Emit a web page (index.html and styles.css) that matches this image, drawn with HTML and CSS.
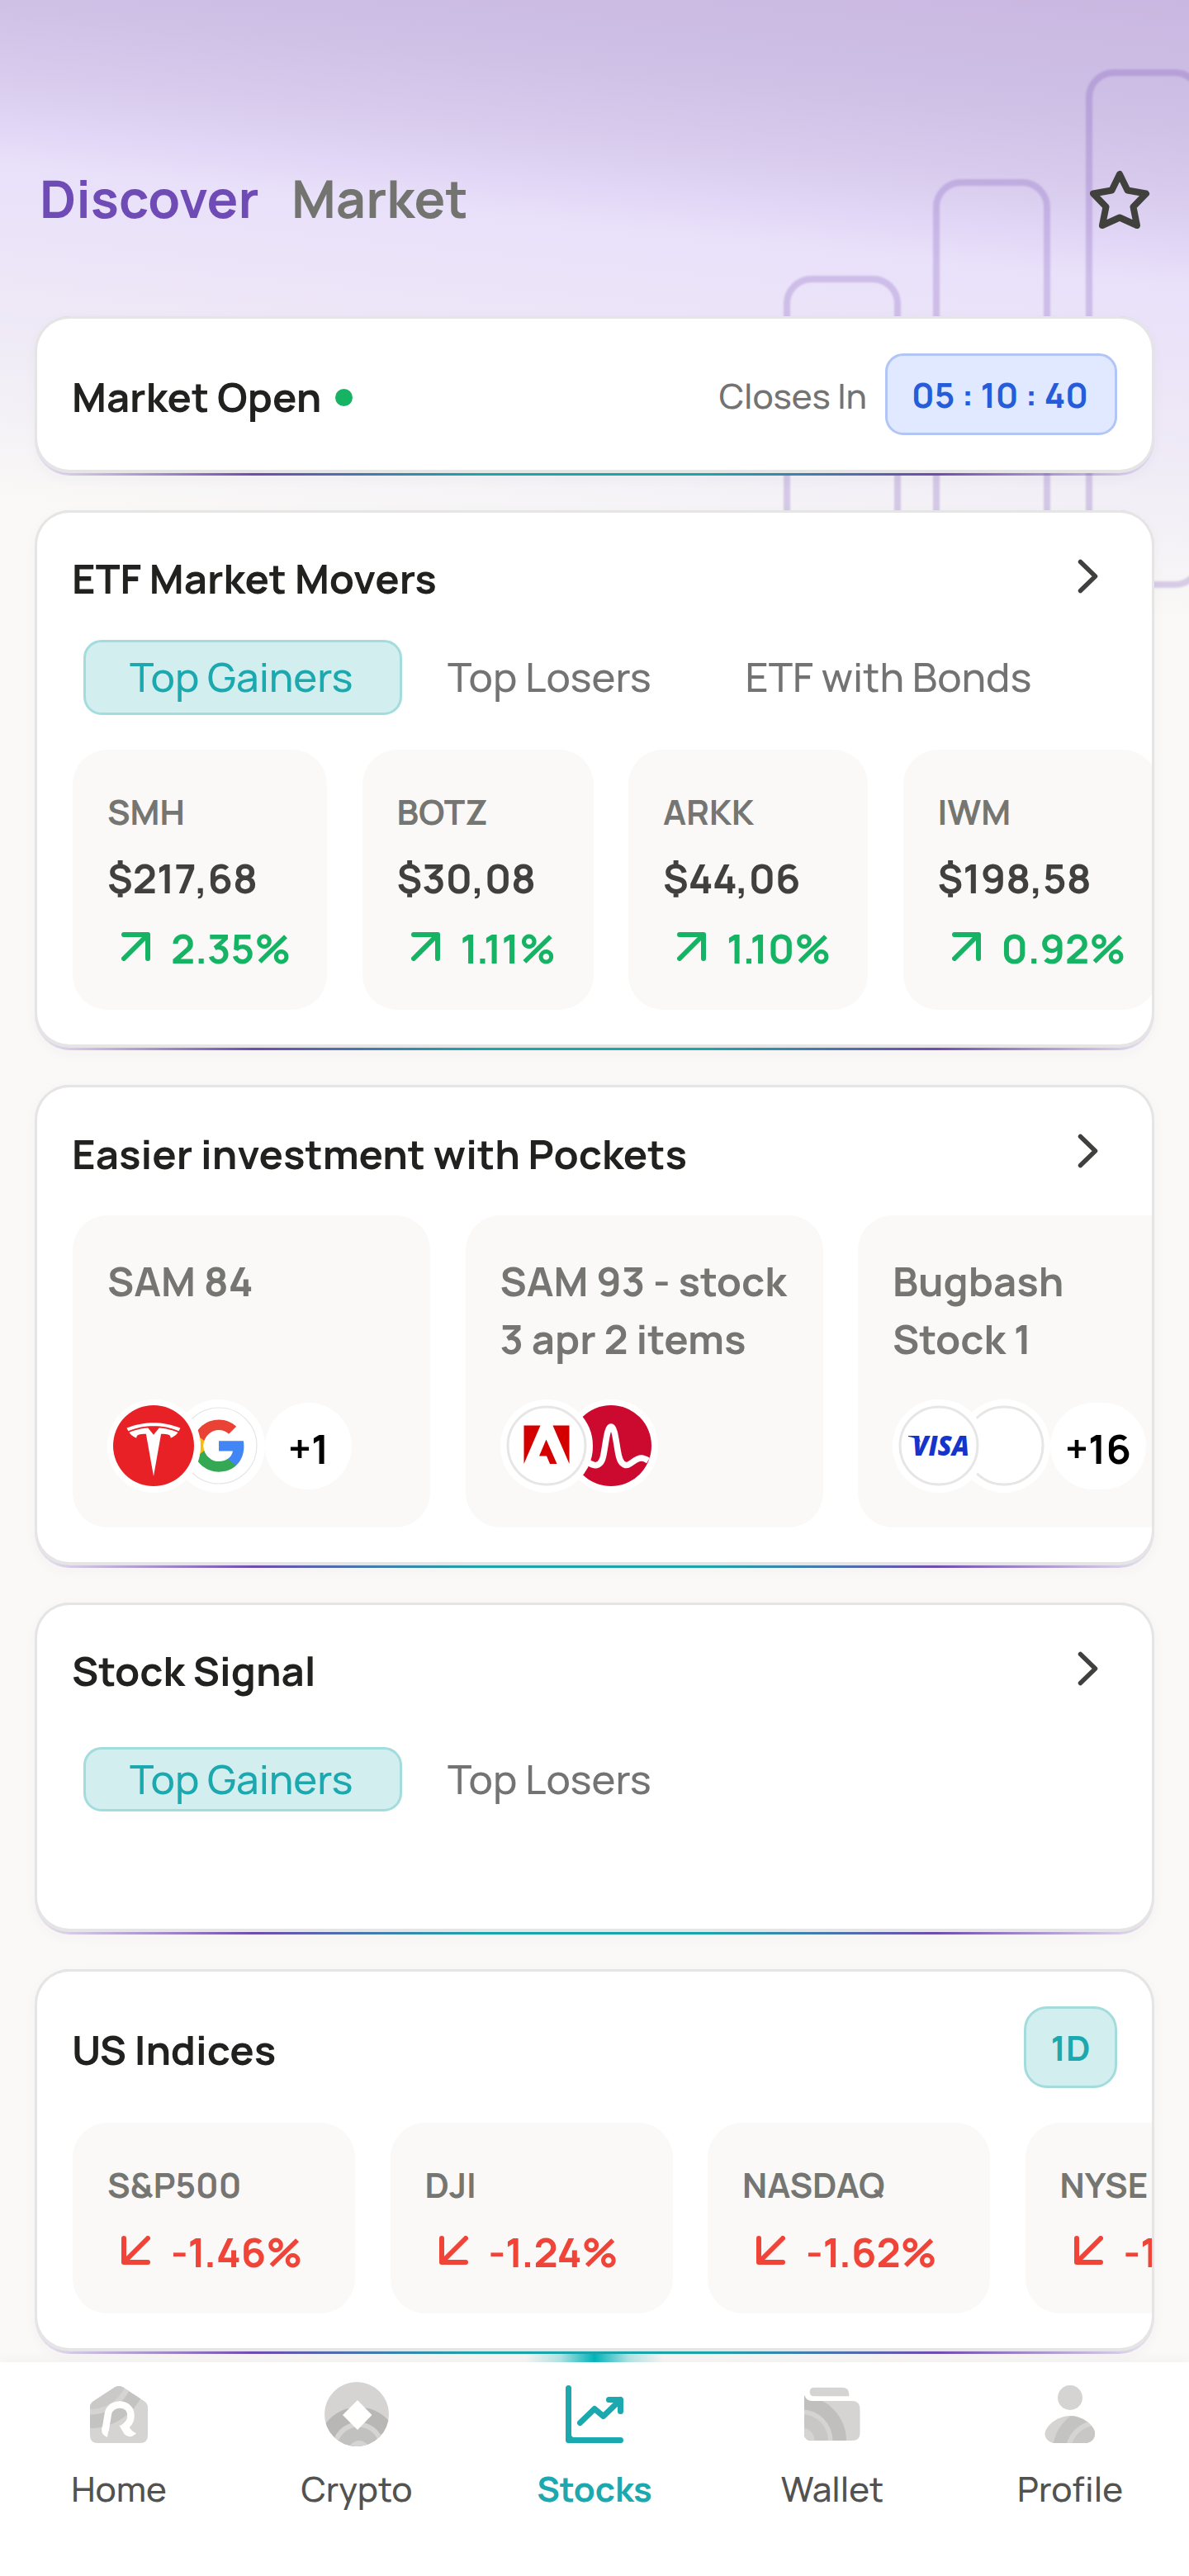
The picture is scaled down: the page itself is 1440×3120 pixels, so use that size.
FILE: index.html
```html
<!DOCTYPE html>
<html lang="en">
<head>
<meta charset="utf-8">
<title>Discover</title>
<link rel="stylesheet" href="styles.css">
</head>
<body>
<svg class="defs" aria-hidden="true">
  <symbol id="up" viewBox="0 0 35 35"><path d="M3 3H32V32M32 3L3 32" fill="none" stroke="currentColor" stroke-width="6" stroke-linecap="round" stroke-linejoin="round"/></symbol>
  <symbol id="down" viewBox="0 0 35 35"><path d="M3 3V32H32M3 32L32 3" fill="none" stroke="currentColor" stroke-width="6" stroke-linecap="round" stroke-linejoin="round"/></symbol>
  <symbol id="chevron" viewBox="0 0 25 42"><path d="M3.5 3.5L21.5 21L3.5 38.500" fill="none" stroke="currentColor" stroke-width="5.500" stroke-linecap="round" stroke-linejoin="round"/></symbol>
</svg>

<main class="screen">
  <div class="backdrop">
    <i class="bar bar-1"></i><i class="bar bar-2"></i><i class="bar bar-3"></i>
  </div>

  <header class="header">
    <h1 class="header-tab active">Discover</h1>
    <span class="header-tab">Market</span>
    <svg class="star" viewBox="0 0 74 71"><path d="M37 5L27.500 24.500L5 28.500L20.500 44.500L16 67L37 57.500L58 67L53.500 44.500L69 28.500L46.500 24.500Z" fill="none" stroke="#40403d" stroke-width="8" stroke-linejoin="round"/></svg>
  </header>

  <section class="edge"><div class="card status">
    <h2 class="title">Market Open</h2>
    <i class="dot"></i>
    <span class="closes">Closes In</span>
    <span class="timer">05 : 10 : 40</span>
  </div></section>

  <section class="edge"><div class="card">
    <div class="head"><h2 class="title">ETF Market Movers</h2><svg class="chevron"><use href="#chevron"/></svg></div>
    <div class="tabs">
      <span class="tab on">Top Gainers</span><span class="tab losers">Top Losers</span><span class="tab bonds">ETF with Bonds</span>
    </div>
    <div class="row">
      <div class="item mover w-308"><span class="label">SMH</span><span class="price">$217,68</span><span class="change up"><svg class="arrow"><use href="#up"/></svg>2.35%</span></div>
      <div class="item mover w-280"><span class="label">BOTZ</span><span class="price">$30,08</span><span class="change up"><svg class="arrow"><use href="#up"/></svg>1.11%</span></div>
      <div class="item mover w-290"><span class="label">ARKK</span><span class="price">$44,06</span><span class="change up"><svg class="arrow"><use href="#up"/></svg>1.10%</span></div>
      <div class="item mover w-308"><span class="label">IWM</span><span class="price">$198,58</span><span class="change up"><svg class="arrow"><use href="#up"/></svg>0.92%</span></div>
    </div>
  </div></section>

  <section class="edge"><div class="card">
    <div class="head"><h2 class="title">Easier investment with Pockets</h2><svg class="chevron"><use href="#chevron"/></svg></div>
    <div class="row">
      <div class="item pocket">
        <p class="name">SAM 84</p>
        <div class="logos">
          <span class="logo front"><svg viewBox="0 0 98 98"><circle cx="49" cy="49" r="49" fill="#e82127"/><path transform="translate(16.600 21.200) scale(2.700)" fill="#fff" d="M12 5.362l2.475-3.026s4.245.09 8.471 2.054c-1.082 1.636-3.231 2.438-3.231 2.438-.146-1.439-1.154-1.790-4.354-1.790L12 24 8.619 5.034c-3.180 0-4.188.354-4.335 1.792 0 0-2.146-.795-3.229-2.430C5.280 2.431 9.525 2.340 9.525 2.340L12 5.362zm0-3.899c3.415-.030 7.326.528 11.328 2.280.535-.968.672-1.395.672-1.395C19.625.612 15.528.015 12 0 8.472.015 4.375.610 0 2.349c0 0 .195.525.672 1.396C4.674 1.989 8.585 1.435 12 1.460z"/></svg></span>
          <span class="logo"><svg viewBox="0 0 98 98"><circle cx="49" cy="49" r="46" fill="#fff" stroke="#e6e6e6" stroke-width="1.200"/><g transform="translate(14.500 14.500) scale(2.877)"><path fill="#4285f4" d="M22.560 12.250c0-.780-.070-1.530-.200-2.250H12v4.260h5.920c-.260 1.370-1.040 2.530-2.210 3.310v2.770h3.570c2.080-1.920 3.280-4.740 3.280-8.090z"/><path fill="#34a853" d="M12 23c2.970 0 5.460-.980 7.280-2.660l-3.570-2.770c-.980.660-2.230 1.060-3.710 1.060-2.860 0-5.290-1.930-6.160-4.530H2.180v2.840C3.990 20.530 7.700 23 12 23z"/><path fill="#fbbc05" d="M5.840 14.090c-.220-.660-.350-1.360-.350-2.090s.130-1.430.350-2.090V7.070H2.180C1.430 8.550 1 10.220 1 12s.430 3.450 1.180 4.930z"/><path fill="#ea4335" d="M12 5.380c1.620 0 3.060.560 4.210 1.640l3.150-3.150C17.450 2.090 14.970 1 12 1 7.700 1 3.990 3.470 2.180 7.070l3.660 2.840c.870-2.600 3.300-4.530 6.160-4.530z"/></g></svg></span>
          <span class="more">+1</span>
        </div>
      </div>
      <div class="item pocket">
        <p class="name">SAM 93 - stock<br>3 apr 2 items</p>
        <div class="logos">
          <span class="logo front"><svg viewBox="0 0 98 98"><circle cx="49" cy="49" r="47" fill="#fff" stroke="#e6e6e6" stroke-width="3"/><path fill="#d40000" d="M21.500 24.500H41.500L21.500 71ZM56.500 24.500H76.500V71ZM48.500 41.500L61.500 71H53L49 61.500H40Z"/></svg></span>
          <span class="logo"><svg viewBox="0 0 98 98"><circle cx="49" cy="49" r="49" fill="#cc092f"/><path d="M18 67C24 71 27 73.500 31.500 72.500C38 71 39.500 64 41 54C43.500 39 45 26 49 26S54.500 39 57 54C58.500 64 60.500 71 66.500 72.500C73 73.500 77 64 86 64C89 64 91.500 65.500 94 67" fill="none" stroke="#fff" stroke-width="7.500"/></svg></span>
        </div>
      </div>
      <div class="item pocket">
        <p class="name">Bugbash<br>Stock 1</p>
        <div class="logos">
          <span class="logo front"><svg viewBox="0 0 98 98"><circle cx="49" cy="49" r="47" fill="#fff" stroke="#e6e6e6" stroke-width="3"/><path d="M12 37H24L27 45Q21 39 12 38Z" fill="#1434cb"/><text class="visa" x="17" y="61" textLength="69" lengthAdjust="spacingAndGlyphs">VISA</text></svg></span>
          <span class="logo"><svg viewBox="0 0 98 98"><circle cx="49" cy="49" r="47" fill="#fff" stroke="#e6e6e6" stroke-width="3"/></svg></span>
          <span class="more wide">+16</span>
        </div>
      </div>
    </div>
  </div></section>

  <section class="edge"><div class="card signal">
    <div class="head"><h2 class="title">Stock Signal</h2><svg class="chevron"><use href="#chevron"/></svg></div>
    <div class="tabs compact">
      <span class="tab on">Top Gainers</span><span class="tab losers">Top Losers</span>
    </div>
  </div></section>

  <section class="edge"><div class="card">
    <div class="head tall"><h2 class="title">US Indices</h2><span class="period">1D</span></div>
    <div class="row">
      <div class="item index"><span class="label">S&amp;P500</span><span class="change down"><svg class="arrow"><use href="#down"/></svg>-1.46%</span></div>
      <div class="item index"><span class="label">DJI</span><span class="change down"><svg class="arrow"><use href="#down"/></svg>-1.24%</span></div>
      <div class="item index"><span class="label">NASDAQ</span><span class="change down"><svg class="arrow"><use href="#down"/></svg>-1.62%</span></div>
      <div class="item index"><span class="label">NYSE</span><span class="change down"><svg class="arrow"><use href="#down"/></svg>-1.28%</span></div>
    </div>
  </div></section>
</main>

<nav class="nav">
  <a class="nav-item">
    <svg class="nav-icon" viewBox="0 0 84 84"><defs><clipPath id="house"><path d="M7 34Q7 29 11 26.500L37 9.500Q42 6.500 47 9.500L73 26.500Q77 29 77 34V67.500Q77 77 67.500 77H16.500Q7 77 7 67.500Z"/></clipPath></defs>
      <g clip-path="url(#house)"><path d="M0 0H84V84H0Z" fill="#d5d4d2"/><circle cx="7" cy="-11" r="70" fill="#c3c3c1"/><circle cx="7" cy="-11" r="53.500" fill="#d5d4d2"/><circle cx="7" cy="-11" r="47" fill="#cac9c7"/></g>
      <path d="M25.500 62L29 41C32 26.500 56.500 26.500 56.500 44C56.500 51 53 54.500 47 59" fill="none" stroke="#fff" stroke-width="8.500"/><path d="M21.300 60.500Q20.500 67 28 70L30 57L22 56ZM42.300 55.500L54.700 57.500Q56 61.500 63 65.300Q55 73 48.500 66Z" fill="#fff"/></svg>
    <span>Home</span>
  </a>
  <a class="nav-item">
    <svg class="nav-icon" viewBox="0 0 84 84"><defs><clipPath id="coin"><circle cx="42" cy="42" r="39"/></clipPath></defs>
      <g clip-path="url(#coin)"><path d="M0 0H84V84H0Z" fill="#d5d4d2"/><circle cx="44" cy="83" r="49.500" fill="#b8b7b6"/><circle cx="44" cy="83" r="31.500" fill="#d5d4d2"/><circle cx="44" cy="83" r="25.500" fill="#c1c1bf"/><circle cx="45" cy="87" r="13" fill="#d5d4d2"/></g><path d="M43 25L60.500 43L43 61L25 43Z" fill="#fff"/></svg>
    <span>Crypto</span>
  </a>
  <a class="nav-item active">
    <svg class="nav-icon" viewBox="0 0 84 84"><path d="M10.500 10.500V73.500H73.500M24.500 52.500L42 35.500L52.700 44.500L73.500 24.500M59.500 24.500H73.500V38.500" fill="none" stroke="#1ba8ae" stroke-width="7" stroke-linecap="round" stroke-linejoin="round"/><path d="M12 66L18 72H12Z" fill="#1ba8ae"/></svg>
    <span>Stocks</span>
  </a>
  <a class="nav-item">
    <svg class="nav-icon" viewBox="0 0 84 84"><defs><clipPath id="purse"><path d="M8 18Q10 26 17 26H66Q75.500 26 75.500 35.500V65Q75.500 74 66 74H17.500Q8 74 8 65Z"/></clipPath></defs>
      <path d="M20 9.700H54Q62.300 9.700 62.300 18V20.300H20Q14.700 20.300 14.700 15T20 9.700Z" fill="#d5d4d2"/>
      <g clip-path="url(#purse)"><path d="M0 0H84V84H0Z" fill="#d5d4d2"/><circle cx="5" cy="74" r="54" fill="#c0bfbe"/><circle cx="5" cy="74" r="37.500" fill="#d5d4d2"/><circle cx="5" cy="74" r="32" fill="#c8c7c5"/><circle cx="5" cy="74" r="15.500" fill="#d5d4d2"/></g></svg>
    <span>Wallet</span>
  </a>
  <a class="nav-item">
    <svg class="nav-icon" viewBox="0 0 84 84"><defs><clipPath id="torso"><path d="M42 44C58 44 72 57 72 65.500C72 72 67 77 60 77H24C17 77 11.500 72 11.500 65.500C11.500 57 26 44 42 44Z"/></clipPath></defs>
      <circle cx="42" cy="22" r="15" fill="#d5d4d2"/><g clip-path="url(#torso)"><path d="M0 0H84V84H0Z" fill="#d5d4d2"/><circle cx="75" cy="88" r="54.500" fill="#c3c3c1"/><circle cx="75" cy="88" r="38.500" fill="#d5d4d2"/><circle cx="75" cy="88" r="32.500" fill="#c8c7c5"/></g></svg>
    <span>Profile</span>
  </a>
</nav>
</body>
</html>
```
FILE: styles.css
```css
* { box-sizing: border-box; margin: 0; padding: 0; }

body {
  width: 1440px;
  height: 3120px;
  overflow: hidden;
  display: flex;
  flex-direction: column;
  background: #faf9f7;
  color: #21211f;
  font-family: Manrope, Inter, sans-serif;
}

.defs { position: absolute; width: 0; height: 0; }

.screen {
  position: relative;
  display: flex;
  flex-direction: column;
  gap: 42px;
  height: 2861px;
  padding: 0 42px;
}

/* Decorative backdrop behind the header */
.backdrop {
  position: absolute;
  inset: 0 0 auto 0;
  height: 800px;
  overflow: hidden;
  background: linear-gradient(185.8deg, #cab7e1 0, #cdbfe5 130px, #d7caec 230px, #e2d7f6 300px, #e9e1fa 345px, #ece4f8 440px, #efeaf6 540px, #f3f1f6 640px, #faf9f7 750px);
}

.bar {
  position: absolute;
  width: 142px;
  border: 8px solid rgba(111, 70, 180, .24);
  border-radius: 34px;
  filter: blur(.8px);
}
.bar-1 { left: 949px; top: 334px; height: 378px; }
.bar-2 { left: 1130px; top: 217px; height: 495px; }
.bar-3 { left: 1315px; top: 84px; height: 628px; }

.header {
  position: relative;
  display: flex;
  align-items: center;
  height: 341px;
  padding: 142px 5px 0 6px;
}
.header-tab {
  margin-top: -3px;
  font-size: 63px;
  font-weight: 700;
  color: #737370;
}
.header-tab.active {
  width: 305px;
  color: #6f4bb6;
}
.star { width: 74px; height: 71px; margin-left: auto; }

/* Cards sit on a coloured strip that shows along their lower edge */
.edge {
  position: relative;
  flex: none;
  padding-bottom: 3px;
  border-radius: 43px;
  background: linear-gradient(90deg, rgba(112, 75, 180, .12) 0, rgba(112, 75, 180, .3) 4%, #6f4bb0 19.500%, #1ba5ab 40%, #1ba5ab 60%, #6f4bb0 80.500%, rgba(112, 75, 180, .3) 96%, rgba(112, 75, 180, .12) 100%);
  box-shadow: 0 4px 16px rgba(60, 50, 70, .035);
}
.card {
  overflow: hidden;
  border: 3px solid #e5e5e5;
  border-bottom-width: 4px;
  border-radius: 42px;
  background: #fff;
  padding-bottom: 42px;
}

.title {
  padding-top: 7px;
  font-size: 49px;
  font-weight: 700;
  line-height: 60px;
}

.status { display: flex; align-items: center; padding: 42px; }
.dot { width: 21px; height: 21px; margin: 9px 0 0 17px; border-radius: 50%; background: #17b364; }
.closes {
  margin-left: auto;
  padding-top: 4px;
  font-size: 42px;
  font-weight: 500;
  color: #737373;
}
.timer {
  width: 281px;
  height: 98.500px;
  margin-left: 22px;
  padding: 4px 0 0 29px;
  border: 3px solid #b1c5f7;
  border-radius: 22px;
  background: #e0e9ff;
  color: #265cd9;
  font-size: 42px;
  font-weight: 700;
  line-height: 86.500px;
  white-space: pre;
}

.head {
  display: flex;
  align-items: center;
  justify-content: space-between;
  height: 154.500px;
  padding: 0 65px 0 42px;
}
.head.tall { height: 183px; padding-right: 42px; }
.chevron { width: 25px; height: 42px; color: #40403f; }

.period {
  width: 113px;
  height: 99px;
  padding-top: 3px;
  border: 3px solid #a3dcdd;
  border-radius: 28px;
  background: #d3eeee;
  color: #1ba8ae;
  font-size: 42px;
  font-weight: 700;
  line-height: 88px;
  text-align: center;
}

.tabs { display: flex; padding-left: 56px; margin-bottom: 42px; }
.tab {
  height: 91px;
  padding-left: 55px;
  font-size: 49px;
  font-weight: 500;
  line-height: 89px;
  color: #737373;
  white-space: nowrap;
}
.tab.on {
  width: 386px;
  padding-left: 53px;
  border: 3px solid #a3dcdd;
  border-radius: 22px;
  background: #d3eeee;
  color: #1ba8ae;
  line-height: 83px;
}
.tab.losers { width: 360.500px; }
.tabs.compact { padding-top: 17.500px; margin-bottom: 0; }
.tabs.compact .tab { height: 78px; line-height: 77px; }
.tabs.compact .tab.on { line-height: 71px; }
.signal { height: 399.500px; }

.row { display: flex; gap: 42.500px; padding-left: 43px; }
.item {
  flex: none;
  display: flex;
  flex-direction: column;
  border-radius: 42px;
  background: #faf9f7;
  padding-left: 42px;
  white-space: nowrap;
}
.mover { height: 315px; padding-top: 44.500px; }
.w-308 { width: 308px; }
.w-280 { width: 280px; }
.w-290 { width: 290px; }
.index { width: 342px; height: 231px; padding-top: 45px; }

.label {
  margin-bottom: 10.500px;
  font-size: 42px;
  font-weight: 700;
  line-height: 60px;
  color: #757572;
}
.price {
  margin-bottom: 2.500px;
  font-size: 49px;
  font-weight: 700;
  line-height: 82px;
  color: #40403e;
}
.change {
  display: flex;
  align-items: center;
  gap: 25px;
  padding-left: 17px;
  font-size: 49px;
  font-weight: 700;
  line-height: 82px;
}
.change.up { color: #17b364; }
.change.down { color: #f04438; }
.arrow { width: 35px; height: 35px; margin-top: -5px; }

.pocket { width: 433px; height: 378px; padding-top: 45px; }
.name {
  height: 178.500px;
  font-size: 49px;
  font-weight: 700;
  line-height: 70px;
  color: #757572;
}
.logos { display: flex; align-items: center; }
.logo {
  display: flex;
  flex: none;
  width: 112.500px;
  height: 112.500px;
  padding: 7.250px;
  border-radius: 50%;
  background: #fff;
}
.logo + .logo { margin-left: -34px; }
.logo svg { width: 98px; height: 98px; }
.front { position: relative; z-index: 1; }
.visa { font: italic 800 33px "Open Sans", sans-serif; fill: #1434cb; }
.more {
  width: 105px;
  height: 105px;
  padding: 8px 0 0 28px;
  border-radius: 53px;
  background: #fff;
  color: #000;
  font-size: 49px;
  font-weight: 700;
  line-height: 95px;
}
.more.wide { width: 116px; padding-left: 18px; }

/* Bottom navigation */
.nav {
  position: relative;
  display: flex;
  height: 259px;
  background: #fff;
  box-shadow: 0 -3px 14px rgba(40, 40, 30, .035);
}
.nav::before {
  content: "";
  position: absolute;
  left: 637px;
  top: -10px;
  width: 166px;
  height: 10px;
  background: linear-gradient(90deg, rgba(0, 179, 186, 0), rgba(0, 179, 186, .28) 25%, #00b3ba 50%, rgba(0, 179, 186, .28) 75%, rgba(0, 179, 186, 0));
}
.nav-item {
  flex: 1;
  display: flex;
  flex-direction: column;
  align-items: center;
  gap: 22.500px;
  padding-top: 21px;
  font-size: 42px;
  font-weight: 500;
  line-height: 50px;
  color: #525250;
}
.nav-item.active { color: #1ba8ae; font-weight: 700; }
.nav-icon { width: 84px; height: 84px; }
```
